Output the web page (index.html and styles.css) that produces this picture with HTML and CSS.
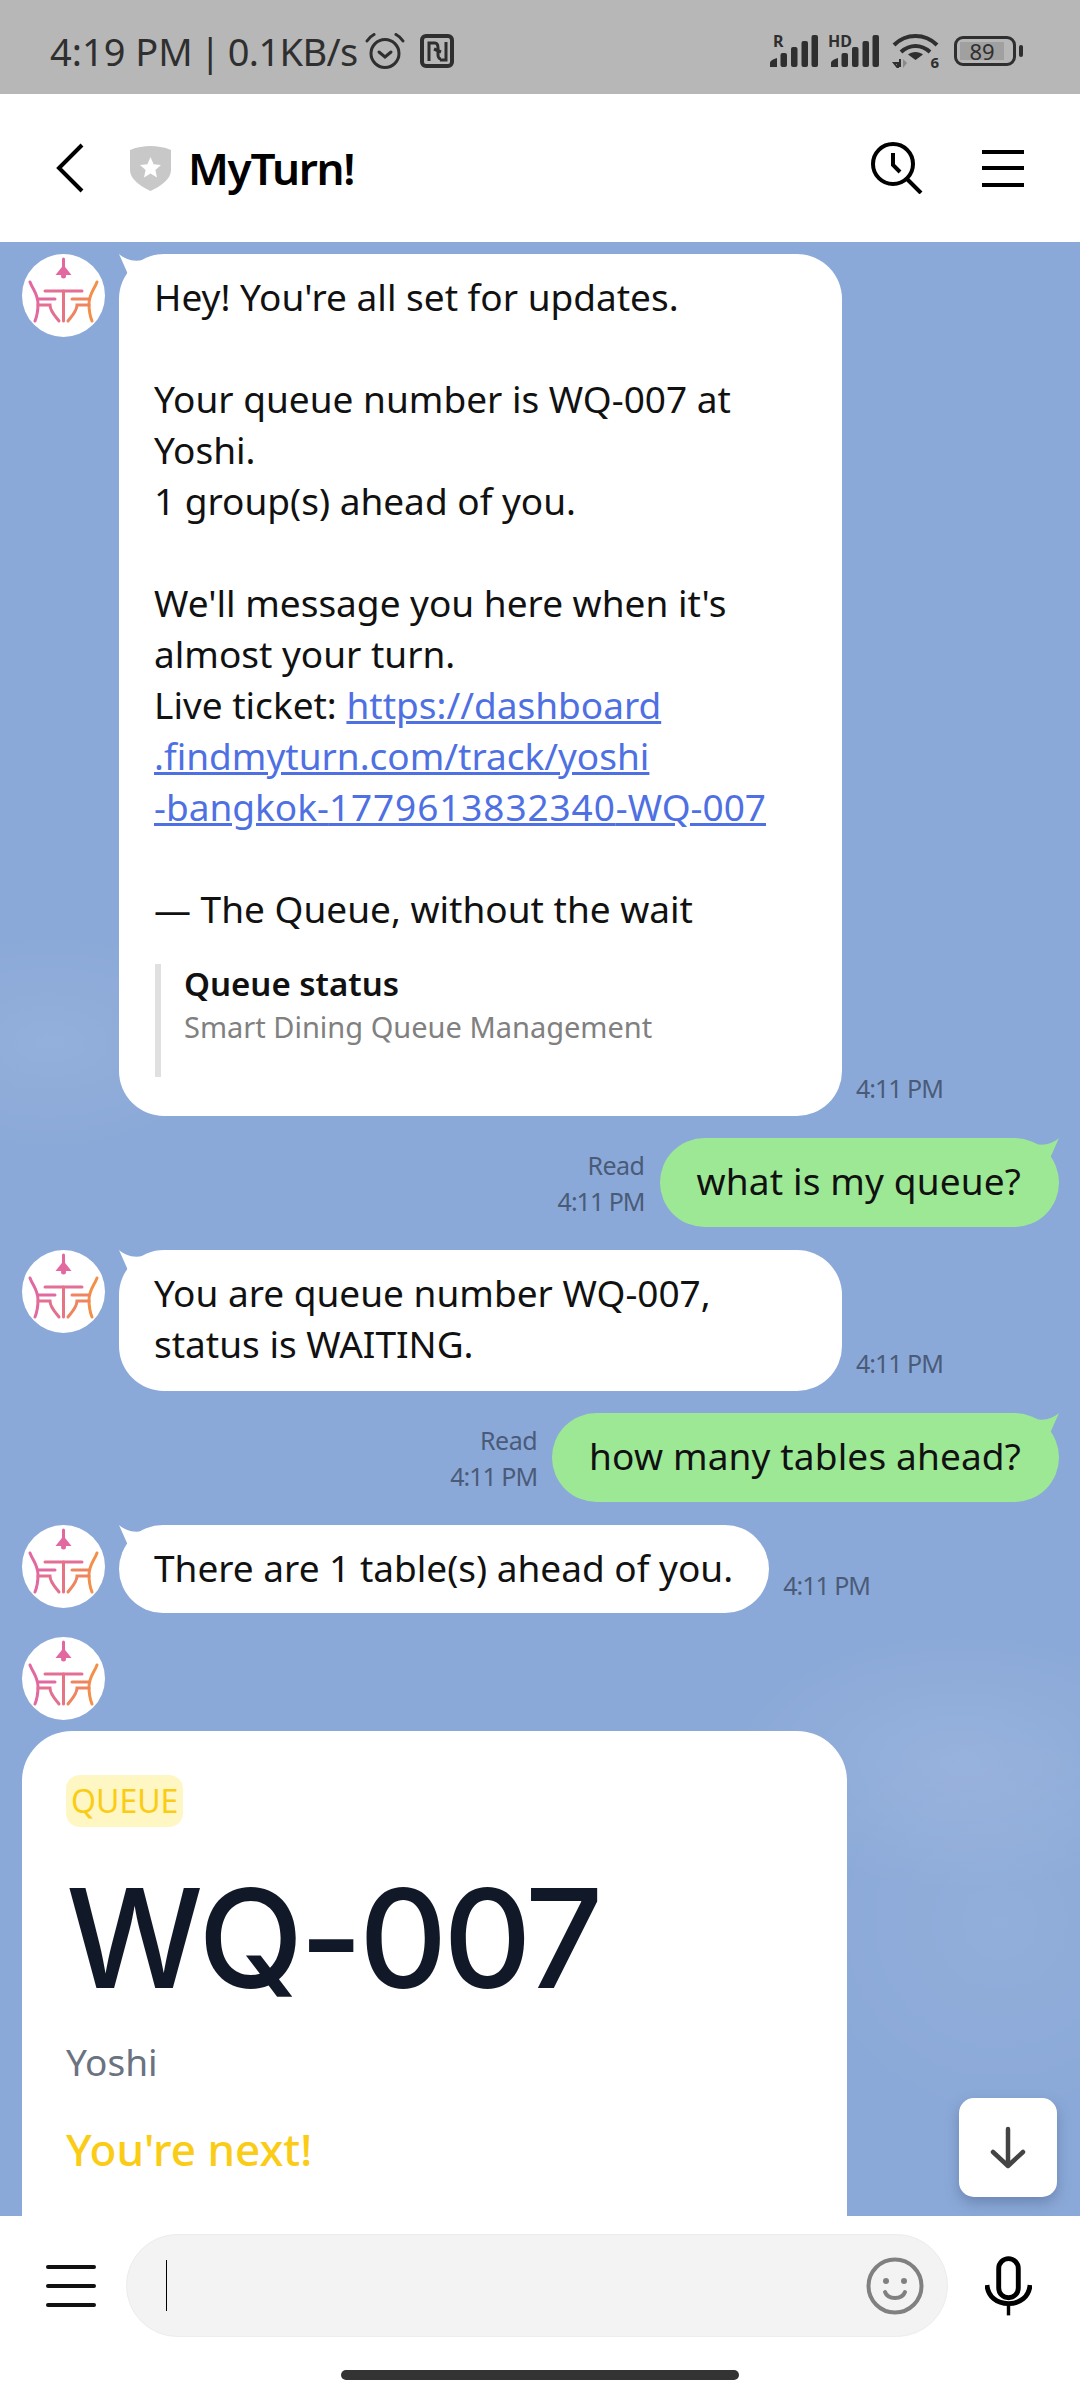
FILE: index.html
```html
<!DOCTYPE html>
<html lang="en">
<head>
<title>MyTurn!</title>
<link rel="stylesheet" href="styles.css">
</head>
<body>
<svg class="defs" width="0" height="0">
  <defs>
    <symbol id="logo" viewBox="0 0 83 83">
      <g fill="none" stroke-width="3" stroke-linecap="round">
        <path stroke="#e2699f" d="M41.5 5V13"/>
        <path stroke="#e36e96" d="M23 37H60"/>
        <path stroke="#e57485" d="M41.5 37V67"/>
        <path stroke="#e2699f" d="M8 28C11 36 16 40 16 50C16 56 15 62 13 67"/>
        <path stroke="#e2699f" d="M16 45H33"/>
        <path stroke="#e4708f" d="M16 51H28C28 57 33 62 37 67"/>
        <path stroke="#f2904a" d="M75 28C72 36 67 40 67 50C67 56 68 62 70 67"/>
        <path stroke="#ee8560" d="M67 45H50"/>
        <path stroke="#ee8560" d="M67 51H55C55 57 50 62 46 67"/>
      </g>
      <path fill="#e2699f" d="M41.5 11L49.5 21H33.5Z"/>
      <circle fill="#e2699f" cx="41.5" cy="22" r="2.5"/>
    </symbol>
    <symbol id="bars" viewBox="0 0 48 32">
      <path fill="#2f2f2f" d="M0 32V28C0 26 3 24 7 23V32Z"/>
      <rect x="10.5" y="18" width="6.5" height="14" rx="2" fill="#2f2f2f"/>
      <rect x="21" y="12" width="6.5" height="20" rx="2" fill="#2f2f2f"/>
      <rect x="31.5" y="6" width="6.5" height="26" rx="2" fill="#2f2f2f"/>
      <rect x="41.5" y="0" width="6.5" height="32" rx="2" fill="#2f2f2f"/>
    </symbol>
    <symbol id="tailIn" viewBox="0 0 34 34">
      <path d="M0 0C6 5 13 8 24 6L34 34L9 30C9 25 9 21 8 18Z"/>
    </symbol>
    <symbol id="tailOut" viewBox="0 0 34 34">
      <path d="M34 0C28 5 21 8 10 6L0 34L25 30C25 25 25 21 26 18Z"/>
    </symbol>
  </defs>
</svg>

<div class="phone">
  <div class="status-bar">
    <div class="status-left">
      <span class="status-time">4:19 PM<span class="sep">|</span><span class="speed">0.1KB/s</span></span>
      <svg class="icon-alarm" width="40" height="36" viewBox="0 0 40 36" fill="none" stroke="#2f2f2f" stroke-width="3">
        <circle cx="20" cy="20.5" r="14"/>
        <path d="M14 19L20 24L26 19" stroke-linecap="round"/>
        <path d="M2 8C4 5 6 3 9 1.5M38 8C36 5 34 3 31 1.5" stroke-linecap="round"/>
      </svg>
      <svg class="icon-nfc" width="34" height="34" viewBox="0 0 34 34" fill="none" stroke="#2f2f2f">
        <rect x="2" y="2" width="30" height="30" rx="4" stroke-width="4"/>
        <path d="M9 27V9H15C18 9 18 12 18 14V21C18 24 20 25 21 25" stroke-width="3"/>
        <path d="M26 8V26H20" stroke-width="3"/>
        <path d="M14 15L21 18" stroke-width="3"/>
      </svg>
    </div>
    <div class="status-right">
      <div class="signal">
        <span class="signal-label">R</span>
        <svg width="48" height="32"><use href="#bars"/></svg>
      </div>
      <div class="signal">
        <span class="signal-label hd">HD</span>
        <svg width="48" height="32"><use href="#bars"/></svg>
      </div>
      <div class="wifi">
        <svg width="47" height="34" viewBox="0 0 47 34" fill="none" stroke="#2f2f2f" stroke-width="4">
          <path d="M2 11C14 -1 33 -1 45 11"/>
          <path d="M9 18C18 10 29 10 38 18"/>
          <path d="M23.5 26L16 20.5C20 17 27 17 31 20.5Z" fill="#2f2f2f" stroke="none"/>
          <path d="M2 29H6V34ZM8 25V33" stroke-width="2"/>
          <path d="M11 25V34L15 29Z" fill="#8a8a8a" stroke="none"/>
        </svg>
        <span class="wifi-six">6</span>
      </div>
      <div class="battery">
        <div class="battery-body"><span class="battery-level">89</span></div>
        <div class="battery-tip"></div>
      </div>
    </div>
  </div>

  <header class="top-bar">
    <svg class="back-icon" width="28" height="50" viewBox="0 0 28 50" fill="none" stroke="#000" stroke-width="4">
      <path d="M26 2L3 25L26 48"/>
    </svg>
    <svg class="shield" width="41" height="45" viewBox="0 0 41 45">
      <path fill="#c8c8c8" d="M0 4C7 1 14 0 20.5 0C27 0 34 1 41 4V24C41 33 31 40 20.5 45C10 40 0 33 0 24Z"/>
      <path fill="#fff" d="M20.5 11L23.6 18.2L31 19L25.4 24L27 31.5L20.5 27.6L14 31.5L15.6 24L10 19L17.4 18.2Z"/>
    </svg>
    <span class="title">MyTurn!</span>
    <svg class="history-icon" width="52" height="52" viewBox="0 0 52 52" fill="none" stroke="#000" stroke-width="4">
      <circle cx="22" cy="22" r="20"/>
      <path d="M22 11V23L29 30"/>
      <path d="M36 37L50 51"/>
    </svg>
    <div class="menu-icon">
      <span></span><span></span><span></span>
    </div>
  </header>

  <main class="chat">
    <div class="row">
      <svg class="avatar" width="83" height="83"><use href="#logo"/></svg>
      <div class="bubble in wide">
        <svg class="tail tail-in" width="34" height="34"><use href="#tailIn"/></svg>
        Hey! You're all set for updates.<br><br>
        Your queue number is WQ-007 at<br>
        Yoshi.<br>
        1 group(s) ahead of you.<br><br>
        We'll message you here when it's<br>
        almost your turn.<br>
        Live ticket: <a href="#">https://dashboard<br>.findmyturn.com/track/yoshi<br>-bangkok-<span class="digits">1779613832340</span>-WQ-007</a><br><br>
        — The Queue, without the wait
        <div class="quote">
          <div class="quote-title">Queue status</div>
          <div class="quote-sub">Smart Dining Queue Management</div>
        </div>
      </div>
      <span class="time">4:11 PM</span>
    </div>

    <div class="row out">
      <div class="meta"><div class="read">Read</div><div>4:11 PM</div></div>
      <div class="bubble green">
        <svg class="tail tail-out" width="34" height="34"><use href="#tailOut"/></svg>
        what is my queue?
      </div>
    </div>

    <div class="row">
      <svg class="avatar" width="83" height="83"><use href="#logo"/></svg>
      <div class="bubble in wide">
        <svg class="tail tail-in" width="34" height="34"><use href="#tailIn"/></svg>
        You are queue number WQ-007,<br>status is WAITING.
      </div>
      <span class="time">4:11 PM</span>
    </div>

    <div class="row out">
      <div class="meta"><div class="read">Read</div><div>4:11 PM</div></div>
      <div class="bubble green">
        <svg class="tail tail-out" width="34" height="34"><use href="#tailOut"/></svg>
        how many tables ahead?
      </div>
    </div>

    <div class="row">
      <svg class="avatar" width="83" height="83"><use href="#logo"/></svg>
      <div class="bubble in">
        <svg class="tail tail-in" width="34" height="34"><use href="#tailIn"/></svg>
        There are 1 table(s) ahead of you.
      </div>
      <span class="time">4:11 PM</span>
    </div>

    <div class="card-group">
      <svg class="avatar" width="83" height="83"><use href="#logo"/></svg>
      <div class="card">
        <span class="badge">QUEUE</span>
        <div class="queue-number">WQ-007</div>
        <div class="venue">Yoshi</div>
        <div class="next">You're next!</div>
      </div>
    </div>

    <div class="scroll-down">
      <svg width="36" height="44" viewBox="0 0 36 44" fill="none" stroke="#444" stroke-width="4.5" stroke-linecap="round" stroke-linejoin="round">
        <path d="M18 3V40M3 26L18 40L33 26"/>
      </svg>
    </div>
  </main>

  <footer class="bottom">
    <div class="input-row">
      <div class="menu-icon small">
        <span></span><span></span><span></span>
      </div>
      <div class="input">
        <div class="caret"></div>
        <svg class="smile" width="58" height="58" viewBox="0 0 58 58" fill="none" stroke="#808080" stroke-width="4">
          <circle cx="29" cy="29" r="26.5"/>
          <circle cx="20" cy="24" r="3" fill="#808080" stroke="none"/>
          <circle cx="38" cy="24" r="3" fill="#808080" stroke="none"/>
          <path d="M19 35C22 43 36 43 39 35" stroke-linecap="round"/>
        </svg>
      </div>
      <svg class="mic" width="48" height="60" viewBox="0 0 48 60" fill="none" stroke="#000">
        <rect x="14" y="2" width="20" height="40" rx="10" stroke-width="5"/>
        <path d="M2 29C3 41 12 48 24 48C36 48 45 41 46 29" stroke-width="5"/>
        <path d="M24 48V60" stroke-width="3.5"/>
      </svg>
    </div>
    <div class="home-bar"></div>
  </footer>
</div>
</body>
</html>
```

FILE: styles.css
```css
* {
  box-sizing: border-box;
}
body {
  margin: 0;
  font-family: "Noto Sans", sans-serif;
  color: #111;
}
.defs {
  position: absolute;
}
.phone {
  width: 1080px;
  height: 2400px;
  display: flex;
  flex-direction: column;
  overflow: hidden;
}

/* status bar */
.status-bar {
  height: 94px;
  flex: none;
  background: #b7b7b7;
  display: flex;
  justify-content: space-between;
  align-items: center;
  padding: 8px 57px 0 50px;
  color: #2f2f2f;
}
.status-left {
  display: flex;
  align-items: center;
}
.status-time {
  font-size: 38px;
  white-space: nowrap;
}
.sep {
  margin: 0 1px 0 7px;
}
.speed {
  margin-left: 6px;
  letter-spacing: -0.6px;
}
.icon-alarm {
  margin-left: 7px;
}
.icon-nfc {
  margin-left: 15px;
}
.status-right {
  display: flex;
  align-items: center;
  gap: 13px;
}
.signal {
  position: relative;
  width: 48px;
  height: 32px;
}
.signal svg {
  display: block;
}
.signal-label {
  position: absolute;
  left: 3px;
  top: 0;
  font-size: 16px;
  font-weight: 700;
  line-height: 12px;
}
.signal-label.hd {
  left: -3px;
}
.wifi {
  position: relative;
  width: 47px;
  height: 34px;
}
.wifi svg {
  display: block;
}
.wifi-six {
  position: absolute;
  right: 0;
  bottom: 0;
  font-size: 15px;
  font-weight: 700;
  line-height: 12px;
}
.battery {
  display: flex;
  align-items: center;
  gap: 3px;
  margin-left: 2px;
}
.battery-body {
  width: 62px;
  height: 30px;
  border: 3px solid #2f2f2f;
  border-radius: 9px;
  padding: 3px 9px 3px 3px;
}
.battery-level {
  display: block;
  height: 100%;
  background: #a0a0a0;
  font-size: 22px;
  line-height: 18px;
  text-align: center;
}
.battery-tip {
  width: 4px;
  height: 12px;
  background: #2f2f2f;
  border-radius: 2px;
}

/* header */
.top-bar {
  height: 148px;
  flex: none;
  background: #fff;
  display: flex;
  align-items: center;
  padding: 0 56px 0 56px;
}
.back-icon {
  margin-right: 46px;
}
.title {
  margin-left: 17px;
  font-size: 44px;
  font-weight: 600;
  letter-spacing: -1.3px;
  color: #000;
  flex: 1;
}
.menu-icon {
  width: 42px;
  height: 37px;
  margin-left: 59px;
  display: flex;
  flex-direction: column;
  justify-content: space-between;
}
.menu-icon span {
  display: block;
  height: 4px;
  background: #000;
}
.menu-icon.small {
  width: 50px;
  height: 42px;
  margin: 0;
  flex: none;
}
.menu-icon.small span {
  border-radius: 2px;
  background: #111;
}

/* chat */
.chat {
  position: relative;
  flex: none;
  height: 1974px;
  padding: 12px 21px 0 22px;
  overflow: hidden;
  display: flex;
  flex-direction: column;
  gap: 22px;
  background-color: #8ba9d8;
  background-image:
    radial-gradient(ellipse 180px 110px at 50px 800px, rgba(255, 255, 255, 0.07), transparent),
    radial-gradient(ellipse 230px 130px at 960px 1520px, rgba(255, 255, 255, 0.1), transparent),
    radial-gradient(ellipse 200px 200px at 1000px 1680px, rgba(255, 255, 255, 0.06), transparent);
}
.row {
  display: flex;
  align-items: flex-start;
  flex: none;
}
.row.out {
  justify-content: flex-end;
  align-items: flex-end;
  margin-bottom: 1px;
}
.avatar {
  flex: none;
  border-radius: 50%;
  background: #fff;
  display: block;
}
.bubble {
  position: relative;
  font-size: 37px;
  line-height: 51px;
  padding: 17px 36px 20px 35px;
  border-radius: 45px;
  white-space: nowrap;
}
.bubble.in {
  background: #fff;
  margin-left: 14px;
}
.bubble.wide {
  width: 723px;
  padding-bottom: 22px;
}
.bubble.green {
  background: #9de895;
  padding: 17px 38px 21px 37px;
  letter-spacing: 0.15px;
}
.bubble a {
  color: #4f70e3;
}
.digits {
  letter-spacing: 0.9px;
}
.tail {
  position: absolute;
  top: 0;
}
.tail-in {
  left: 0;
  fill: #fff;
}
.tail-out {
  right: 0;
  fill: #9de895;
}
.time {
  align-self: flex-end;
  margin: 0 0 12px 14px;
  font-size: 25px;
  letter-spacing: -1px;
  line-height: 32px;
  color: #4a5b78;
  white-space: nowrap;
}
.meta {
  margin: 0 15px 8px 0;
  font-size: 25px;
  letter-spacing: -1px;
  line-height: 36px;
  color: #4a5b78;
  text-align: right;
}
.read {
  letter-spacing: -0.5px;
}
.quote {
  margin: 30px 0 17px 1px;
  height: 113px;
  border-left: 6px solid #e0e0e0;
  padding-left: 23px;
  white-space: nowrap;
}
.quote-title {
  font-size: 33px;
  font-weight: 600;
  line-height: 40px;
}
.quote-sub {
  font-size: 29px;
  line-height: 46px;
  color: #808080;
}

/* queue card */
.card-group {
  display: flex;
  flex-direction: column;
  gap: 11px;
  flex: none;
  margin-top: 2px;
}
.card {
  width: 825px;
  height: 700px;
  background: #fff;
  border-radius: 50px;
  padding: 44px;
}
.badge {
  display: inline-block;
  height: 52px;
  padding: 0 5px;
  border-radius: 14px;
  background: #fef7c3;
  color: #facc15;
  font-size: 32px;
  line-height: 52px;
}
.queue-number {
  margin-top: 28px;
  font-family: Inter, sans-serif;
  font-size: 137px;
  font-weight: 500;
  letter-spacing: -4px;
  line-height: 166px;
  color: #111827;
}
.venue {
  margin-top: 15px;
  font-size: 37px;
  line-height: 52px;
  color: #6b7280;
}
.next {
  margin-top: 31px;
  font-size: 44px;
  font-weight: 500;
  line-height: 60px;
  color: #facc15;
}
.scroll-down {
  position: absolute;
  left: 959px;
  top: 1856px;
  width: 98px;
  height: 99px;
  background: #fff;
  border-radius: 15px;
  box-shadow: 0 6px 14px rgba(50, 70, 110, 0.35);
  display: flex;
  align-items: center;
  justify-content: center;
}

/* input */
.bottom {
  flex: 1;
  background: #fff;
  display: flex;
  flex-direction: column;
  align-items: center;
}
.input-row {
  width: 100%;
  display: flex;
  align-items: center;
  padding: 18px 48px 0 46px;
}
.input {
  margin-left: 30px;
  width: 822px;
  height: 103px;
  flex: none;
  display: flex;
  align-items: center;
  justify-content: space-between;
  padding: 0 23px 0 39px;
  background: #f3f3f3;
  border: 1px solid #ececec;
  border-radius: 52px;
}
.caret {
  width: 1px;
  height: 51px;
  background: #000;
}
.mic {
  margin-left: 37px;
}
.home-bar {
  margin-top: 33px;
  width: 398px;
  height: 10px;
  background: #333;
  border-radius: 5px;
}
```
